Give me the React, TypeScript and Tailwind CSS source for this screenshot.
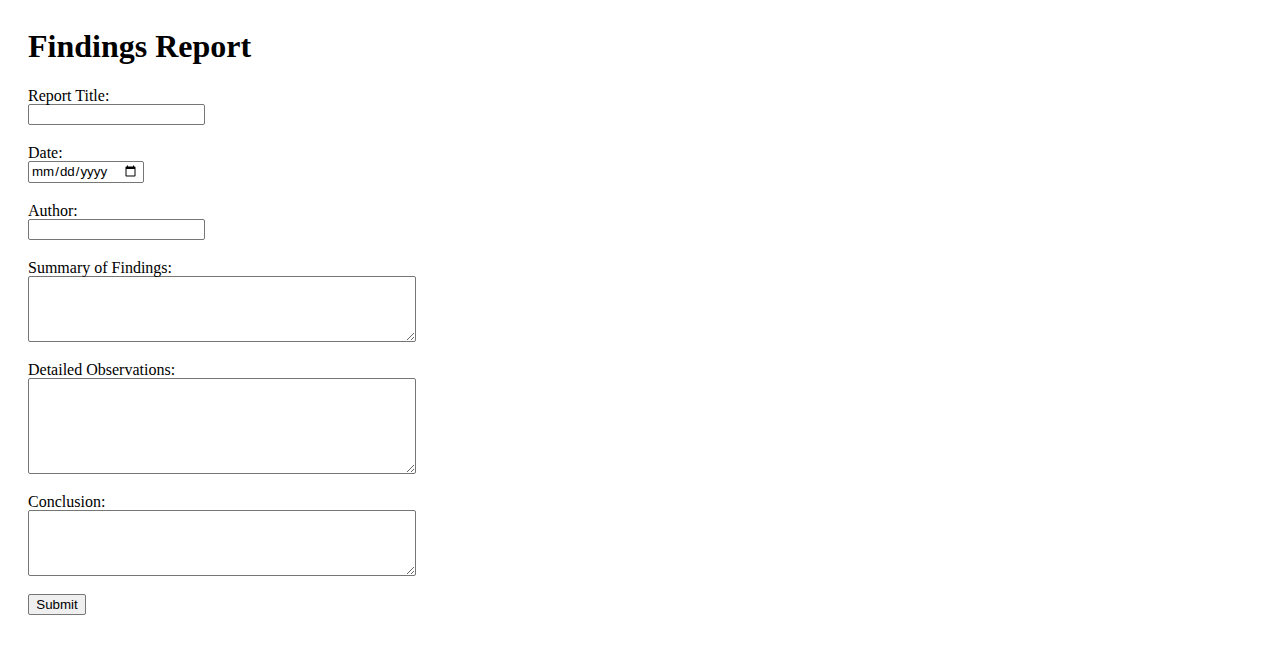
import { useState } from 'react';

const fieldCls = 'block border border-[#767676] rounded-[2px] bg-white outline-none';
const labelCls = 'block text-[16px] leading-[18px] pt-[1px] -mb-[1px]';

const App = () => {
  const [title, setTitle] = useState('');
  const [date, setDate] = useState('');
  const [author, setAuthor] = useState('');

  return (
    <div className="min-h-[650px] bg-white pl-[28px] pt-[29px] text-black font-['Liberation_Serif','Times_New_Roman',serif]">
      <h1 className="text-[32px] font-bold leading-[35px] mb-[22px]">Findings Report</h1>
      <form onSubmit={(e) => e.preventDefault()}>
        <div className="mb-[18px]">
          <label htmlFor="title" className={labelCls}>
            Report Title:
          </label>
          <input
            id="title"
            type="text"
            value={title}
            onChange={(e) => setTitle(e.target.value)}
            className={`${fieldCls} w-[177px] h-[21px] px-[2px] text-[13.33px] font-['Liberation_Sans',sans-serif]`}
          />
        </div>
        <div className="mb-[18px]">
          <label htmlFor="date" className={labelCls}>
            Date:
          </label>
          <input
            id="date"
            type="date"
            value={date}
            onChange={(e) => setDate(e.target.value)}
            className={`${fieldCls} w-[116px] h-[22px] pl-[2px] pr-[4px] text-[13.33px] font-['Liberation_Sans',sans-serif]`}
          />
        </div>
        <div className="mb-[18px]">
          <label htmlFor="author" className={labelCls}>
            Author:
          </label>
          <input
            id="author"
            type="text"
            value={author}
            onChange={(e) => setAuthor(e.target.value)}
            className={`${fieldCls} w-[177px] h-[21px] px-[2px] text-[13.33px] font-['Liberation_Sans',sans-serif]`}
          />
        </div>
        <div className="mb-[18px]">
          <label htmlFor="summary" className={labelCls}>
            Summary of Findings:
          </label>
          <textarea
            id="summary"
            className={`${fieldCls} w-[388px] h-[66px] p-[2px] text-[13.33px] font-['Liberation_Mono',monospace]`}
          />
        </div>
        <div className="mb-[18px]">
          <label htmlFor="observations" className={labelCls}>
            Detailed Observations:
          </label>
          <textarea
            id="observations"
            className={`${fieldCls} w-[388px] h-[96px] p-[2px] text-[13.33px] font-['Liberation_Mono',monospace]`}
          />
        </div>
        <div className="mb-[18px]">
          <label htmlFor="conclusion" className={labelCls}>
            Conclusion:
          </label>
          <textarea
            id="conclusion"
            className={`${fieldCls} w-[388px] h-[66px] p-[2px] text-[13.33px] font-['Liberation_Mono',monospace]`}
          />
        </div>
        <button
          type="submit"
          className="block w-[58px] h-[21px] border border-[#767676] rounded-[2px] bg-[#efefef] text-center text-[13.33px] leading-[17px] font-['Liberation_Sans',Arial,sans-serif] text-black"
        >
          Submit
        </button>
      </form>
    </div>
  );
};

export default App;
